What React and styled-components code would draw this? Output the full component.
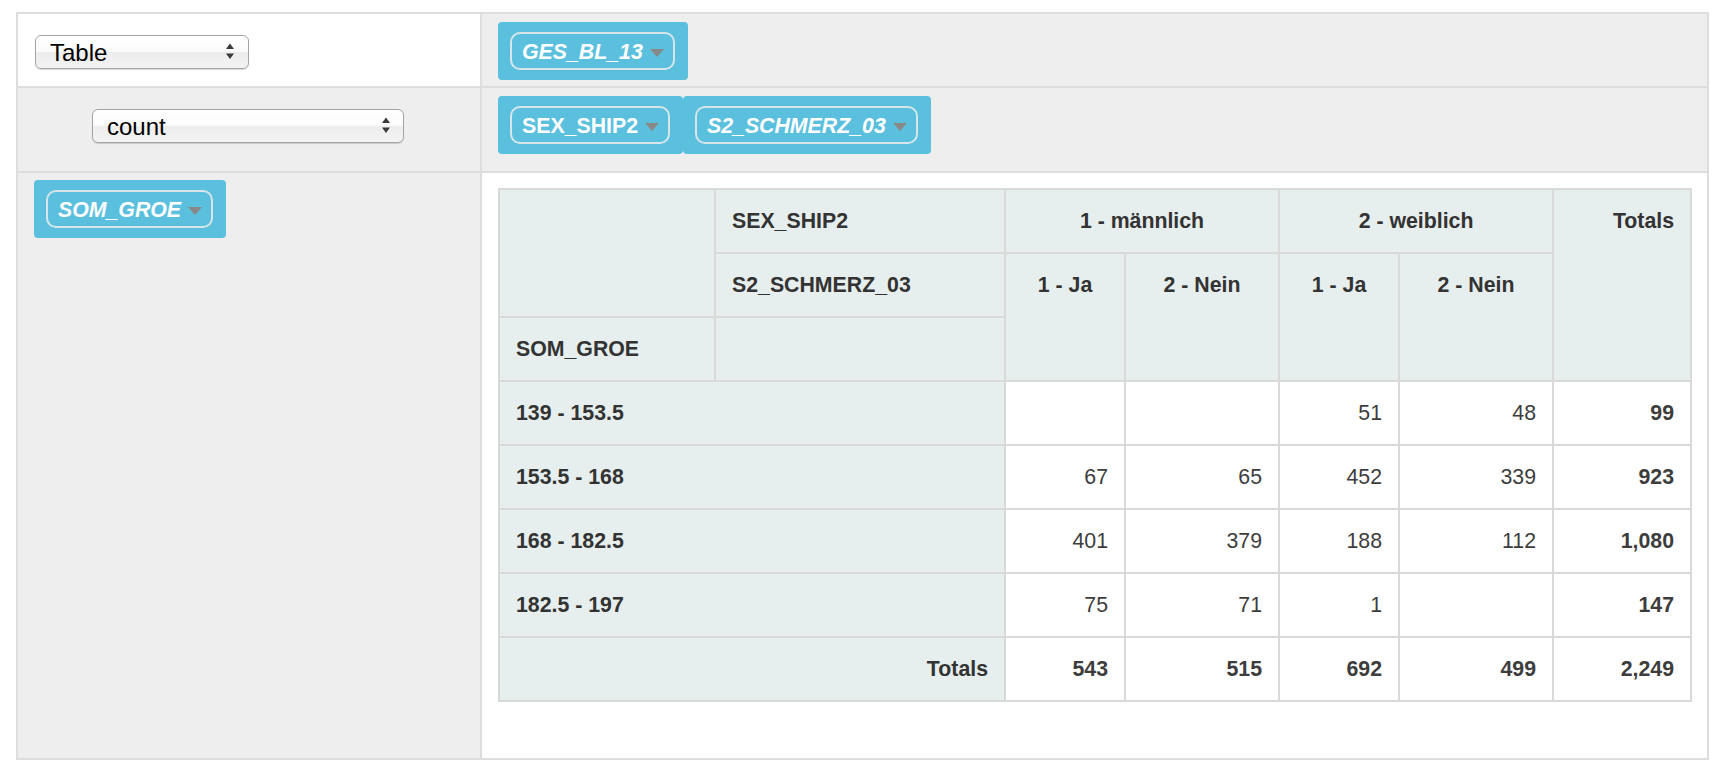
import React from "react";
import styled, { createGlobalStyle } from "styled-components";

const GlobalStyle = createGlobalStyle`
  html, body {
    margin: 0;
    padding: 0;
    background: #ffffff;
  }
  body {
    font-family: "Liberation Sans", Arial, sans-serif;
    color: #333333;
  }
`;

const Page = styled.div`
  padding: 12px 0 0 16px;
`;

const PivotUi = styled.div`
  display: grid;
  grid-template-columns: 462px 1225px;
  grid-template-rows: 72px 83px 585px;
  gap: 2px;
  padding: 2px;
  width: fit-content;
  background: #dddddd;
`;

const RendererCell = styled.div`
  background: #ffffff;
  padding: 21px 17px;
`;

const AggregatorCell = styled.div`
  background: #eeeeee;
  display: flex;
  justify-content: center;
  padding: 21px 2px 0 0;
`;

const AxisCell = styled.div`
  background: #eeeeee;
  padding: ${(p) => p.$top || 8}px 16px;
`;

const RendererArea = styled.div`
  background: #ffffff;
  padding: 15px 16px;
`;

/* native-looking select */
const SelectWrap = styled.div`
  position: relative;
  width: ${(p) => p.$width}px;
  height: 34px;
`;

const NativeSelect = styled.select`
  appearance: none;
  -webkit-appearance: none;
  box-sizing: border-box;
  width: 100%;
  height: 100%;
  margin: 0;
  padding: 0 0 0 14px;
  border: 1px solid #a4a4a4;
  border-radius: 6px;
  background: linear-gradient(#ffffff 0%, #fbfbfb 48%, #ededed 52%, #f3f3f3 100%);
  box-shadow: 0 1px 1px rgba(0, 0, 0, 0.15);
  font-family: "Liberation Sans", Arial, sans-serif;
  font-size: 24px;
  color: #000000;
  outline: none;
`;

const Spinner = styled.svg`
  position: absolute;
  right: ${(p) => p.$right}px;
  top: 8px;
  pointer-events: none;
`;

const Select = ({ value, options, width, arrowRight }) => (
  <SelectWrap $width={width}>
    <NativeSelect defaultValue={value}>
      {options.map((o) => (
        <option key={o}>{o}</option>
      ))}
    </NativeSelect>
    <Spinner $right={arrowRight} width="8" height="17" viewBox="0 0 8 17">
      <polygon points="0,6 4,0.5 8,6" fill="#3a3a3a" />
      <polygon points="0,10.5 8,10.5 4,16" fill="#3a3a3a" />
    </Spinner>
  </SelectWrap>
);

/* attribute chips */
const AxisList = styled.div`
  display: flex;
  align-items: flex-start;
`;

const Chip = styled.div`
  background: #5bc0de;
  border-radius: 4px;
  padding: 10px 13px 10px 12px;
`;

const ChipLabel = styled.span`
  display: flex;
  align-items: center;
  border: 2px solid #d6e6ea;
  border-radius: 10px;
  padding: 6px 9px 4px 10px;
  line-height: 24px;
  font-size: 21.3px;
  font-weight: bold;
  font-style: ${(p) => (p.$italic ? "italic" : "normal")};
  color: #ffffff;
  white-space: nowrap;
`;

const Triangle = styled.span`
  width: 0;
  height: 0;
  margin: 2px 0 0 7px;
  border-left: 7px solid transparent;
  border-right: 7px solid transparent;
  border-top: 8px solid #888888;
`;

const Attr = ({ name, italic }) => (
  <Chip>
    <ChipLabel $italic={italic}>
      {name}
      <Triangle />
    </ChipLabel>
  </Chip>
);

/* pivot table */
const PivotTable = styled.table`
  border-collapse: collapse;
  table-layout: fixed;
  width: 1194px;
  font-family: "Liberation Sans", Arial, sans-serif;
  font-size: 21.3px;
  line-height: 24px;
`;

const Col = styled.col`
  width: ${(p) => p.$w}px;
`;

const HeadCell = styled.th`
  background: #e6eeee;
  border: 2px solid #d9d9d9;
  padding: 19px 16px;
  color: #333333;
  font-weight: bold;
  text-align: ${(p) => p.$align || "left"};
  vertical-align: top;
  white-space: nowrap;
`;

const ValueCell = styled.td`
  background: #ffffff;
  border: 2px solid #d9d9d9;
  padding: 19px 16px;
  color: #3d3d3d;
  text-align: right;
  vertical-align: top;
  font-weight: ${(p) => (p.$total ? "bold" : "normal")};
`;

const colWidths = [216, 290, 120, 154, 120, 154, 138];

const colGroups = [
  { label: "1 - männlich", keys: ["1 - Ja", "2 - Nein"] },
  { label: "2 - weiblich", keys: ["1 - Ja", "2 - Nein"] },
];

const rows = [
  { label: "139 - 153.5", values: ["", "", "51", "48"], total: "99" },
  { label: "153.5 - 168", values: ["67", "65", "452", "339"], total: "923" },
  { label: "168 - 182.5", values: ["401", "379", "188", "112"], total: "1,080" },
  { label: "182.5 - 197", values: ["75", "71", "1", ""], total: "147" },
];

const colTotals = ["543", "515", "692", "499"];
const grandTotal = "2,249";

const Table = () => (
  <PivotTable>
    <colgroup>
      {colWidths.map((w, i) => (
        <Col key={i} $w={w} />
      ))}
    </colgroup>
    <thead>
      <tr>
        <HeadCell rowSpan={2} />
        <HeadCell>SEX_SHIP2</HeadCell>
        {colGroups.map((g) => (
          <HeadCell key={g.label} colSpan={2} $align="center">
            {g.label}
          </HeadCell>
        ))}
        <HeadCell rowSpan={3} $align="right">
          Totals
        </HeadCell>
      </tr>
      <tr>
        <HeadCell>S2_SCHMERZ_03</HeadCell>
        {colGroups.map((g) =>
          g.keys.map((k) => (
            <HeadCell key={g.label + k} rowSpan={2} $align="center">
              {k}
            </HeadCell>
          ))
        )}
      </tr>
      <tr>
        <HeadCell>SOM_GROE</HeadCell>
        <HeadCell />
      </tr>
    </thead>
    <tbody>
      {rows.map((r) => (
        <tr key={r.label}>
          <HeadCell colSpan={2}>{r.label}</HeadCell>
          {r.values.map((v, i) => (
            <ValueCell key={i}>{v}</ValueCell>
          ))}
          <ValueCell $total>{r.total}</ValueCell>
        </tr>
      ))}
      <tr>
        <HeadCell colSpan={2} $align="right">
          Totals
        </HeadCell>
        {colTotals.map((v, i) => (
          <ValueCell key={i} $total>
            {v}
          </ValueCell>
        ))}
        <ValueCell $total>{grandTotal}</ValueCell>
      </tr>
    </tbody>
  </PivotTable>
);

export default function App() {
  return (
    <>
      <GlobalStyle />
      <Page>
        <PivotUi>
          <RendererCell>
            <Select
              value="Table"
              options={["Table", "Table Barchart", "Heatmap"]}
              width={214}
              arrowRight={15}
            />
          </RendererCell>
          <AxisCell>
            <AxisList>
              <Attr name="GES_BL_13" italic />
            </AxisList>
          </AxisCell>
          <AggregatorCell>
            <Select
              value="count"
              options={["count", "sum", "average"]}
              width={312}
              arrowRight={14}
            />
          </AggregatorCell>
          <AxisCell>
            <AxisList>
              <Attr name="SEX_SHIP2" />
              <Attr name="S2_SCHMERZ_03" italic />
            </AxisList>
          </AxisCell>
          <AxisCell $top={7}>
            <AxisList>
              <Attr name="SOM_GROE" italic />
            </AxisList>
          </AxisCell>
          <RendererArea>
            <Table />
          </RendererArea>
        </PivotUi>
      </Page>
    </>
  );
}
